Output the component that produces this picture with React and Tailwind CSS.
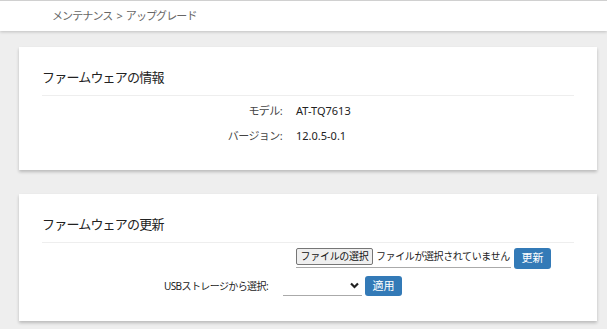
import React from 'react';

const font = { fontFamily: '"Noto Sans", "Noto Sans CJK JP", sans-serif' };

const Card = ({ title, children, className = '' }) => (
  <div className={`bg-white ml-[19px] mr-[10px] px-[23px] pt-[20px] shadow-[0_2px_3px_rgba(0,0,0,0.22)] ${className}`}>
    <h2 className="text-[13px] tracking-[-0.8px] leading-[20px] text-[#222] pb-[8px] border-b border-[#eeeeee] font-normal">{title}</h2>
    {children}
  </div>
);

const InfoRow = ({ label, value }) => (
  <div className="flex items-center h-[25px] text-[11px] text-[#222]">
    <div className="w-[240px] text-right text-[#444] tracking-[-0.6px]">{label}</div>
    <div className="ml-[14px]">{value}</div>
  </div>
);

export default function App() {
  return (
    <div className="w-[607px] h-[329px] bg-[#eeeeee] overflow-hidden" style={font}>
      <header className="h-[31px] bg-white border-t border-[#d0d0d0] shadow-[0_1px_3px_rgba(0,0,0,0.2)] flex items-center pl-[52px]">
        <span className="text-[11px] tracking-[-0.9px] text-[#666] flex items-center">
          メンテナンス<span className="mx-[4px]">&gt;</span>アップグレード
        </span>
      </header>

      <Card title="ファームウェアの情報" className="mt-[16px] h-[123px]">
        <div className="pt-[3px]">
          <InfoRow label="モデル:" value="AT-TQ7613" />
          <InfoRow label="バージョン:" value="12.0.5-0.1" />
        </div>
      </Card>

      <Card title="ファームウェアの更新" className="mt-[24px] h-[127px]">
        <div className="pt-[5px] flex flex-col">
          <div className="flex items-start pl-[254px]">
            <div className="flex items-center border-b border-[#aaaaaa] pb-[2px] w-[215px]">
              <button className="h-[17px] w-[77px] border border-[#767676] bg-[#efefef] text-[10px] tracking-[-0.3px] leading-[15px] text-[#111] rounded-[2px] whitespace-nowrap">ファイルの選択</button>
              <span className="ml-[3px] text-[10px] tracking-[-0.4px] text-[#222] whitespace-nowrap">ファイルが選択されていません</span>
            </div>
            <button className="ml-[3px] w-[37px] h-[21px] bg-[#337ab7] text-white text-[11px] rounded-[3px]">更新</button>
          </div>
          <div className="flex items-center mt-[7px]">
            <div className="w-[226px] text-right text-[10px] tracking-[-0.6px] text-[#222]">USBストレージから選択:</div>
            <div className="ml-[15px] w-[79px] h-[20px] border-b border-[#aaaaaa] flex items-center justify-end pr-[3px]">
              <svg width="9" height="7" viewBox="0 0 9 7"><path d="M1 1.5 L4.5 5 L8 1.5" fill="none" stroke="#222" strokeWidth="2.2" /></svg>
            </div>
            <button className="ml-[3px] w-[37px] h-[20px] bg-[#337ab7] text-white text-[11px] rounded-[3px]">適用</button>
          </div>
        </div>
      </Card>
    </div>
  );
}
